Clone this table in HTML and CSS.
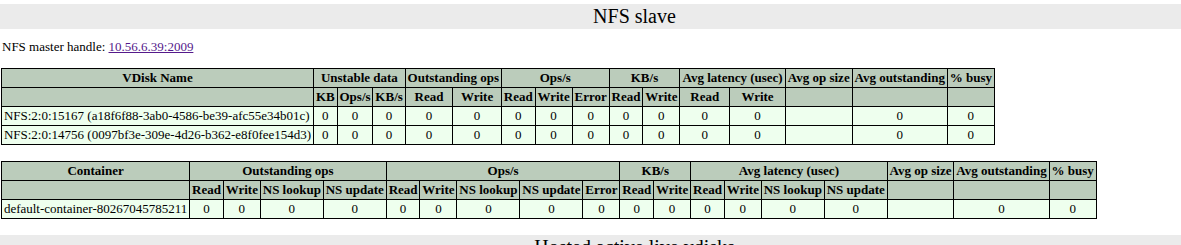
FILE: index.html
```html
<!DOCTYPE html>
<html>
<head>
<meta charset="utf-8">
<link rel="stylesheet" href="styles.css">
</head>
<body>
<div class="banner"><span>NFS slave</span></div>
<p class="handle">NFS master handle: <a href="#">10.56.6.39:2009</a></p>
<table class="stats">
  <tr class="hdr">
    <th>VDisk Name</th>
    <th colspan="3">Unstable data</th>
    <th colspan="2">Outstanding ops</th>
    <th colspan="3">Ops/s</th>
    <th colspan="2">KB/s</th>
    <th colspan="2">Avg latency (usec)</th>
    <th>Avg op size</th>
    <th>Avg outstanding</th>
    <th>% busy</th>
  </tr>
  <tr class="hdr">
    <th></th>
    <th>KB</th><th>Ops/s</th><th>KB/s</th>
    <th class="or">Read</th><th class="ow">Write</th>
    <th>Read</th><th>Write</th><th>Error</th>
    <th>Read</th><th>Write</th>
    <th class="lr">Read</th><th class="lw">Write</th>
    <th></th><th></th><th></th>
  </tr>
  <tr>
    <td class="name">NFS:2:0:15167 (a18f6f88-3ab0-4586-be39-afc55e34b01c)</td>
    <td>0</td><td>0</td><td>0</td><td>0</td><td>0</td><td>0</td><td>0</td><td>0</td><td>0</td><td>0</td><td>0</td><td>0</td><td></td><td>0</td><td>0</td>
  </tr>
  <tr>
    <td class="name">NFS:2:0:14756 (0097bf3e-309e-4d26-b362-e8f0fee154d3)</td>
    <td>0</td><td>0</td><td>0</td><td>0</td><td>0</td><td>0</td><td>0</td><td>0</td><td>0</td><td>0</td><td>0</td><td>0</td><td></td><td>0</td><td>0</td>
  </tr>
</table>
<table class="stats second">
  <tr class="hdr">
    <th>Container</th>
    <th colspan="4">Outstanding ops</th>
    <th colspan="5">Ops/s</th>
    <th colspan="2">KB/s</th>
    <th colspan="4">Avg latency (usec)</th>
    <th>Avg op size</th>
    <th>Avg outstanding</th>
    <th>% busy</th>
  </tr>
  <tr class="hdr">
    <th></th>
    <th>Read</th><th>Write</th><th>NS lookup</th><th>NS update</th>
    <th>Read</th><th>Write</th><th>NS lookup</th><th>NS update</th><th>Error</th>
    <th>Read</th><th>Write</th>
    <th>Read</th><th>Write</th><th>NS lookup</th><th>NS update</th>
    <th></th><th></th><th></th>
  </tr>
  <tr>
    <td class="name">default-container-80267045785211</td>
    <td>0</td><td>0</td><td>0</td><td>0</td>
    <td>0</td><td>0</td><td>0</td><td>0</td><td>0</td>
    <td>0</td><td>0</td>
    <td>0</td><td>0</td><td>0</td><td>0</td>
    <td></td><td>0</td><td>0</td>
  </tr>
</table>
<div class="banner"><span>Hosted active live vdisks</span></div>
</body>
</html>
```
FILE: styles.css
```css
html, body {
  margin: 0;
  padding: 0;
  background: #ffffff;
}
body {
  font-family: "Liberation Serif", "Times New Roman", serif;
  font-size: 13px;
  color: #000000;
  padding: 4px 0 0 0;
}
.banner {
  background: #ebebeb;
  height: 25px;
  line-height: 25px;
  font-size: 20px;
  text-align: center;
  padding-left: 88px;
  white-space: nowrap;
}
.handle {
  margin: 10px 0 14px 2px;
  line-height: 15px;
}
.handle a {
  color: #551a8b;
}
.stats {
  border-collapse: collapse;
  margin: 0 0 16px 1px;
}
.stats th, .stats td {
  border: 1px solid #000000;
  padding: 1px 1.9px 2px 1.9px;
  line-height: 15px;
  text-align: center;
  white-space: nowrap;
}
.stats th {
  background: #bbccbb;
  font-weight: bold;
}
.stats td {
  background: #eeffee;
}
.stats td.name {
  text-align: left;
}
.stats th.or { width: 42px; }
.stats th.ow { width: 43px; }
.stats th.lr { width: 45px; }
.stats th.lw { width: 51px; }
```
